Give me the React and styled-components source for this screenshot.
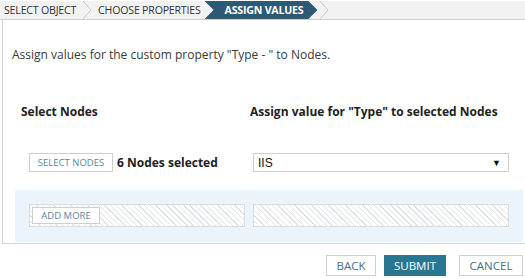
import React, { useState } from 'react';
import styled, { createGlobalStyle } from 'styled-components';

const GlobalStyle = createGlobalStyle`
  html, body {
    margin: 0;
    padding: 0;
    background: #fff;
    font-family: "Open Sans", "Noto Sans", sans-serif;
    color: #333;
  }
`;

const STEPS = ['Select Object', 'Choose Properties', 'Assign Values'];

const Page = styled.div`
  width: 525px;
  height: 279px;
  overflow: hidden;
`;

const Crumbs = styled.div`
  display: flex;
  align-items: stretch;
  height: 18px;
  margin-top: 1px;
  background: #f2f2f2;
  border-bottom: 1px solid #cfcfcf;
`;

const Crumb = styled.div`
  display: flex;
  align-items: center;
  height: 18px;
  font-size: 10.6px;
  text-transform: uppercase;
  letter-spacing: -0.2px;
  white-space: nowrap;
  color: ${({ $active }) => ($active ? '#fff' : '#333')};
  font-weight: ${({ $active }) => ($active ? 700 : 400)};
  background: ${({ $active }) => ($active ? '#2c5a74' : 'transparent')};
  padding: ${({ $active }) => ($active ? '0 14px 0 20px' : '0 4px')};
  margin-left: ${({ $active }) => ($active ? '-8px' : '0')};
  clip-path: ${({ $active }) =>
    $active ? 'polygon(0 0, calc(100% - 9px) 0, 100% 50%, calc(100% - 9px) 100%, 0 100%, 9px 50%)' : 'none'};
`;

const Sep = styled.svg`
  flex: none;
  width: ${({ $w }) => $w || 12}px;
  height: 18px;
  margin: 0 1px;
`;

const Chevron = () => (
  <Sep viewBox="0 0 12 18">
    <polyline points="2,0 10,9 2,18" fill="none" stroke="#c8c8c8" strokeWidth="1" />
  </Sep>
);

const Panel = styled.div`
  margin-left: 2px;
  border-left: 1px solid #d4d4d4;
  border-bottom: 1px solid #d4d4d4;
  padding-top: 27px;
  height: 196px;
`;

const Intro = styled.p`
  margin: 0 0 0 9px;
  font-size: 12px;
  line-height: 16px;
  color: #3a3a3a;
`;

const Heads = styled.div`
  display: grid;
  grid-template-columns: 229px 1fr;
  padding-left: 18px;
  margin-top: 41px;
  font-size: 12px;
  font-weight: 700;
  line-height: 16px;
  color: #222;
`;

const Cols = styled.div`
  display: grid;
  grid-template-columns: 216px 256px;
  column-gap: 8px;
  padding-left: ${({ $inset }) => $inset}px;
`;

const NodesRow = styled(Cols)`
  margin-top: 33px;
  align-items: center;
`;

const Cell = styled.div`
  display: flex;
  align-items: center;
  gap: 4px;
`;

const SmallBtn = styled.button`
  flex: none;
  width: ${({ $w }) => $w}px;
  height: ${({ $h }) => $h}px;
  padding: 0;
  border: 1px solid #cfcfcf;
  background: #fff;
  font-family: "Open Sans", sans-serif;
  font-size: 9.5px;
  text-transform: uppercase;
  color: #5d85a0;
  white-space: nowrap;
  cursor: pointer;
`;

const Count = styled.span`
  font-size: 12px;
  font-weight: 700;
  color: #222;
  white-space: nowrap;
`;

const Select = styled.div`
  display: flex;
  align-items: center;
  justify-content: space-between;
  height: 17px;
  padding: 0 7px 0 4px;
  border: 1px solid #cfcfcf;
  font-family: "Liberation Sans", Arial, sans-serif;
  font-size: 12px;
  color: #111;
`;

const Caret = styled.span`
  font-size: 9px;
  color: #111;
`;

const MoreArea = styled.div`
  margin: 18px 0 0 12px;
  width: 508px;
  height: 52px;
  padding-top: 14px;
  box-sizing: border-box;
  background: #ebf4fa;
`;

const Hatch = styled.div`
  display: flex;
  align-items: center;
  height: 23px;
  box-sizing: border-box;
  padding-left: 2px;
  border: 1px solid #d3dde3;
  background: repeating-linear-gradient(
    45deg,
    #fff 0px,
    #fff 3px,
    #dfe3e6 3px,
    #dfe3e6 4px
  );
`;

const Footer = styled.div`
  display: flex;
  justify-content: flex-end;
  padding: 11px 2px 0 0;
`;

const FootBtn = styled.button`
  width: ${({ $w }) => $w}px;
  height: 21px;
  margin-left: ${({ $gap }) => $gap}px;
  padding: 0;
  border: 1px solid ${({ $primary }) => ($primary ? '#28768f' : '#d0d0d0')};
  background: ${({ $primary }) => ($primary ? '#28768f' : '#fff')};
  color: ${({ $primary }) => ($primary ? '#fff' : '#47708a')};
  font-family: "Open Sans", sans-serif;
  font-size: 11.5px;
  text-transform: uppercase;
  cursor: pointer;
`;

const App = () => {
  const [value] = useState('IIS');

  return (
    <Page>
      <GlobalStyle />
      <Crumbs>
        {STEPS.map((step, i) => (
          <React.Fragment key={step}>
            <Crumb $active={i === STEPS.length - 1}>{step}</Crumb>
            {i < STEPS.length - 2 && <Chevron />}
            {i === STEPS.length - 2 && <Sep as="span" $w={6} />}
          </React.Fragment>
        ))}
        <Chevron />
      </Crumbs>
      <Panel>
        <Intro>Assign values for the custom property "Type - " to Nodes.</Intro>
        <Heads>
          <span>Select Nodes</span>
          <span>Assign value for "Type" to selected Nodes</span>
        </Heads>
        <NodesRow $inset={26}>
          <Cell>
            <SmallBtn $w={84} $h={19}>Select Nodes</SmallBtn>
            <Count>6 Nodes selected</Count>
          </Cell>
          <Select>
            {value}
            <Caret>▼</Caret>
          </Select>
        </NodesRow>
        <MoreArea>
          <Cols $inset={14}>
            <Hatch>
              <SmallBtn $w={68} $h={17}>Add More</SmallBtn>
            </Hatch>
            <Hatch />
          </Cols>
        </MoreArea>
      </Panel>
      <Footer>
        <FootBtn $w={50} $gap={0}>Back</FootBtn>
        <FootBtn $w={62} $gap={8} $primary>Submit</FootBtn>
        <FootBtn $w={64} $gap={13}>Cancel</FootBtn>
      </Footer>
    </Page>
  );
};

export default App;
